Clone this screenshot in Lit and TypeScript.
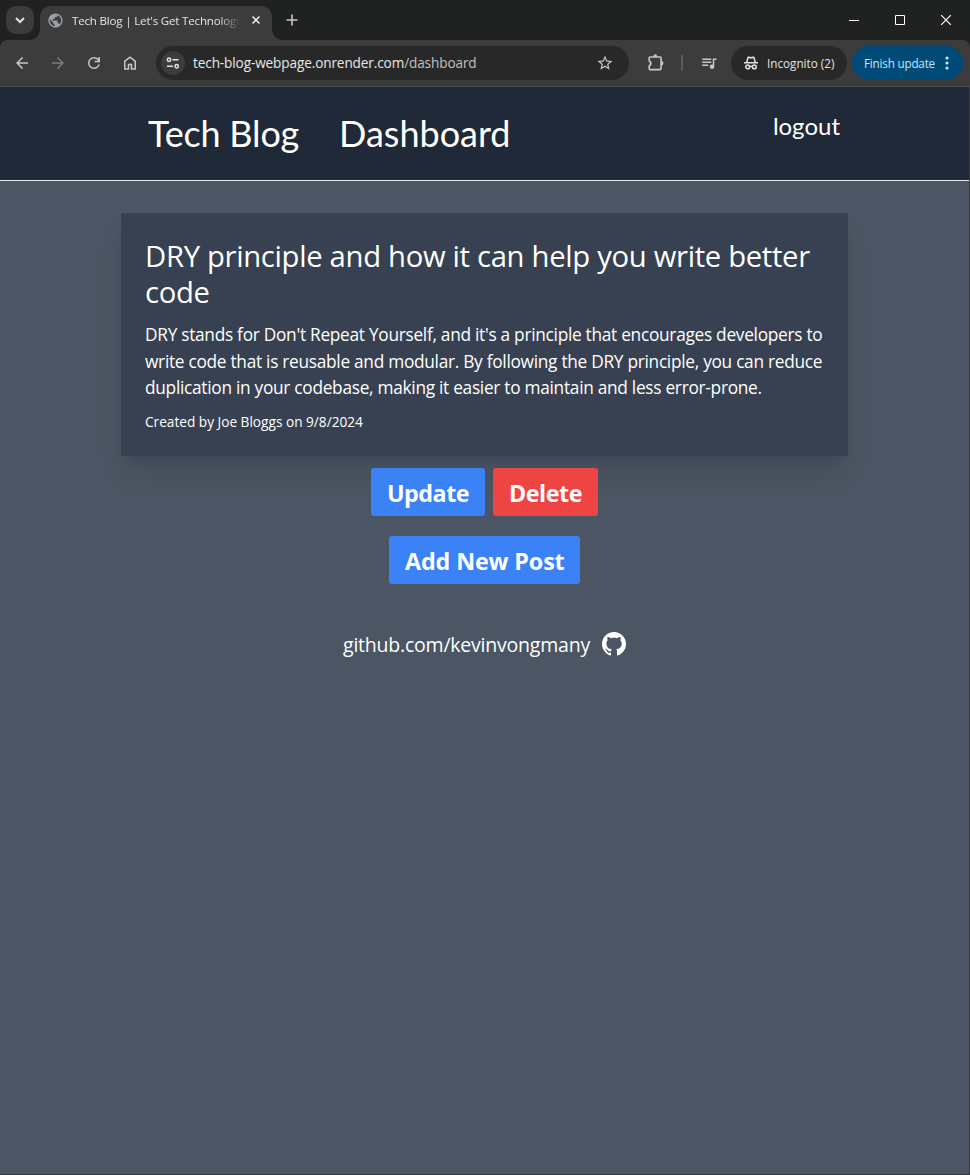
import { LitElement, html, css, svg } from "lit";
import { customElement, property } from "lit/decorators.js";

const paths: Record<string, string> = {
  back: "M20 11H7.83l5.59-5.59L12 4l-8 8 8 8 1.41-1.41L7.83 13H20v-2z",
  forward: "M12 4l-1.41 1.41L16.17 11H4v2h12.17l-5.58 5.59L12 20l8-8z",
  reload:
    "M12 20q-3.35 0-5.675-2.325T4 12q0-3.35 2.325-5.675T12 4q1.725 0 3.3.7125T18 6.75V4h2v7h-7V9h4.2q-.8-1.4-2.1875-2.2T12 6Q9.5 6 7.75 7.75T6 12q0 2.5 1.75 4.25T12 18q1.925 0 3.475-1.1T17.65 14h2.1q-.7 2.65-2.85 4.325T12 20Z",
  home: "M6 19h3v-6h6v6h3v-9l-6-4.5L6 10v9zm-2 2V9l8-6 8 6v12h-7v-6h-2v6H4z",
  star: "M22 9.24l-7.19-.62L12 2 9.19 8.63 2 9.24l5.46 4.73L5.82 21 12 17.27 18.18 21l-1.63-7.03L22 9.24zM12 15.4l-3.76 2.27 1-4.28-3.32-2.88 4.38-.38L12 6.1l1.71 4.04 4.38.38-3.32 2.88 1 4.28L12 15.4z",
  puzzle:
    "M20 10.2V6c0-1.1-.9-2-2-2h-4a2.3 2.3 0 0 0-4.6 0H5c-1.1 0-2 .9-2 2v4.3c2.4.6 2.4 4.8 0 5.4V20c0 1.1.9 2 2 2h13c1.1 0 2-.9 2-2v-4.2c2.6-.6 2.6-5 0-5.600zM18 20H5v-3c2.900-2 2.900-6 0-8V6h13z",
  queue:
    "M15 6H3v2h12V6zm0 4H3v2h12v-2zM3 16h8v-2H3v2zM17 6v8.180c-.310-.110-.650-.180-1-.180-1.660 0-3 1.340-3 3s1.340 3 3 3 3-1.340 3-3V8h3V6h-5z",
  globe:
    "M12 2C6.480 2 2 6.480 2 12s4.480 10 10 10 10-4.480 10-10S17.520 2 12 2zm-1 17.930c-3.950-.490-7-3.850-7-7.930 0-.620.080-1.210.210-1.790L9 15v1c0 1.100.900 2 2 2v1.930zm6.900-2.540c-.260-.810-1-1.390-1.900-1.390h-1v-3c0-.550-.450-1-1-1H8v-2h2c.550 0 1-.450 1-1V7h2c1.100 0 2-.900 2-2v-.410c2.930 1.190 5 4.060 5 7.410 0 2.080-.800 3.970-2.100 5.390z",
};

@customElement("ui-icon")
class UiIcon extends LitElement {
  @property() name = "";
  @property({ type: Number }) size = 18;

  static styles = css`
    :host { display: inline-flex; }
    svg { display: block; fill: currentColor; }
  `;

  render() {
    return html`<svg width=${this.size} height=${this.size} viewBox="0 0 24 24">
      ${svg`<path d=${paths[this.name] ?? ""}></path>`}
    </svg>`;
  }
}

@customElement("browser-chrome")
class BrowserChrome extends LitElement {
  static styles = css`
    :host {
      display: block;
      font-family: "Open Sans", "Noto Sans", sans-serif;
      background: #202222;
      color: #e3e3e3;
    }
    svg { display: block; }
    .strip { display: flex; height: 40px; padding-left: 6px; box-sizing: border-box; }
    .search {
      display: grid; place-items: center;
      width: 28px; height: 28px; margin-top: 6px;
      border-radius: 10px; background: #3c3c3c;
    }
    .tab {
      position: relative;
      display: flex; align-items: center;
      width: 232px; height: 34px; margin: 6px 0 0 6px;
      padding: 0 11px 6px 7px; box-sizing: border-box;
      border-radius: 10px 10px 0 0; background: #3c3c3c;
    }
    .tab::before, .tab::after {
      content: ""; position: absolute; bottom: 0; width: 10px; height: 10px;
    }
    .tab::before { left: -10px; background: radial-gradient(circle at 0 0, transparent 9.5px, #3c3c3c 10px); }
    .tab::after { right: -10px; background: radial-gradient(circle at 100% 0, transparent 9.5px, #3c3c3c 10px); }
    .favicon { color: #9aa0a6; }
    .title {
      flex: 1; margin: 1px 12px 0 8px; overflow: hidden; white-space: nowrap;
      font-size: 11.6px; line-height: 16px; letter-spacing: -0.2px;
      -webkit-mask-image: linear-gradient(90deg, #000 147px, transparent 169px);
      mask-image: linear-gradient(90deg, #000 147px, transparent 169px);
    }
    .plus { display: grid; place-items: center; width: 40px; height: 40px; }
    .window { display: flex; margin-left: auto; padding-right: 1px; }
    .window span { display: grid; place-items: center; width: 46px; height: 40px; }
    .toolbar {
      display: flex; align-items: center;
      height: 47px; padding: 0 7px 1px 4px; box-sizing: border-box;
      background: #3c3c3c; border-bottom: 1px solid #4a4a4a;
      border-radius: 8px 8px 0 0; color: #c7c7c7;
    }
    .cell { display: grid; place-items: center; width: 36px; height: 34px; }
    .off { color: #7c7c7c; }
    .omnibox {
      display: flex; align-items: center;
      width: 473px; height: 34px; margin: 0 8px; padding: 0 15px 0 5px;
      box-sizing: border-box; border-radius: 17px; background: #282828;
    }
    .site { display: grid; place-items: center; width: 24px; height: 24px; border-radius: 50%; background: #3c3c3c; }
    .url { flex: 1; margin-left: 8px; font-size: 13.6px; letter-spacing: -0.12px; color: #e8e8e8; }
    .url span { color: #c0c0c0; }
    .divider { width: 2px; height: 16px; margin: 0 8px; background: #5c5c5c; }
    .pill {
      display: flex; align-items: center; height: 34px; box-sizing: border-box;
      border-radius: 17px; font-size: 11.7px; white-space: nowrap;
    }
    .incognito { width: 116px; margin-left: 4px; padding-left: 12px; gap: 8px; background: #282828; color: #e3e3e3; }
    .update { width: 111px; margin-left: 5px; padding-left: 12px; gap: 10px; background: #004a77; color: #c2e7ff; letter-spacing: -0.2px; }
  `;

  render() {
    return html`
      <div class="strip">
        <div class="search">
          <svg width="10" height="7" viewBox="0 0 10 7" fill="none" stroke="#e3e3e3" stroke-width="2"><path d="M1 1l4 4 4-4" /></svg>
        </div>
        <div class="tab">
          <ui-icon class="favicon" name="globe" size="17"></ui-icon>
          <div class="title">Tech Blog | Let's Get Technologi</div>
          <svg width="10" height="10" viewBox="0 0 10 10" stroke="#e3e3e3" stroke-width="1.6"><path d="M1.5 1.5l7 7M8.5 1.5l-7 7" /></svg>
        </div>
        <div class="plus">
          <svg width="12" height="12" viewBox="0 0 12 12" stroke="#c7c7c7" stroke-width="1.6"><path d="M6 .5v11M.5 6h11" /></svg>
        </div>
        <div class="window">
          <span><svg width="10" height="10" viewBox="0 0 10 10" stroke="#fff"><path d="M0 5.5h10" /></svg></span>
          <span><svg width="10" height="10" viewBox="0 0 10 10" stroke="#fff" fill="none"><path d="M.5.5h9v9h-9z" /></svg></span>
          <span><svg width="10" height="10" viewBox="0 0 10 10" stroke="#fff" stroke-width="1.2"><path d="M0 0l10 10M10 0L0 10" /></svg></span>
        </div>
      </div>
      <div class="toolbar">
        <div class="cell"><ui-icon name="back"></ui-icon></div>
        <div class="cell off"><ui-icon name="forward"></ui-icon></div>
        <div class="cell"><ui-icon name="reload"></ui-icon></div>
        <div class="cell"><ui-icon name="home"></ui-icon></div>
        <div class="omnibox">
          <div class="site">
            <svg width="14" height="12" viewBox="0 0 14 12" fill="none" stroke="#e3e3e3" stroke-width="1.5">
              <circle cx="3" cy="2.7" r="1.7" /><path d="M6.5 2.7H12.5M1 9.3h6" /><circle cx="10.7" cy="9.3" r="1.7" />
            </svg>
          </div>
          <div class="url">tech-blog-webpage.onrender.com<span>/dashboard</span></div>
          <ui-icon name="star"></ui-icon>
        </div>
        <div class="cell"><ui-icon name="puzzle" size="19"></ui-icon></div>
        <div class="divider"></div>
        <div class="cell"><ui-icon name="queue"></ui-icon></div>
        <div class="pill incognito">
          <svg width="16" height="16" viewBox="0 0 16 16" fill="none" stroke="#e3e3e3" stroke-width="1.5">
            <path d="M1 7.7h14M3.7 7.5l1.3-4.9c.1-.4.5-.5.8-.3 1.400.6 3 .6 4.400 0 .3-.2.700-.1.800.3l1.300 4.900" />
            <circle cx="4.7" cy="11.9" r="1.9" /><circle cx="11.3" cy="11.9" r="1.9" /><path d="M6.6 11.6q1.4-.7 2.8 0" />
          </svg>
          <span>Incognito (2)</span>
        </div>
        <div class="pill update">
          <span>Finish update</span>
          <svg width="4" height="16" viewBox="0 0 4 16" fill="#c2e7ff"><circle cx="2" cy="3" r="1.6" /><circle cx="2" cy="8" r="1.6" /><circle cx="2" cy="13" r="1.6" /></svg>
        </div>
      </div>
    `;
  }
}

@customElement("blog-page")
class BlogPage extends LitElement {
  static styles = css`
    :host {
      display: flex; flex-direction: column;
      background: #4b5563; color: #fff;
      border-right: 1px solid #343a40; border-bottom: 1px solid #343a40;
      font-family: "Open Sans", "Noto Sans", sans-serif;
    }
    header {
      display: flex; align-items: flex-start;
      height: 94px; box-sizing: border-box; padding: 26px 129px 0 148px;
      background: #1f2937; border-bottom: 1px solid #e5e7eb;
      font-family: Lato, sans-serif;
    }
    nav { display: flex; gap: 40px; font-size: 36px; line-height: 40px; }
    .brand { letter-spacing: -0.2px; }
    .logout { margin: -3px 0 0 auto; font-size: 24px; line-height: 32px; }
    main { display: flex; flex-direction: column; align-items: center; padding-top: 32px; }
    article {
      width: 727px; height: 243px; box-sizing: border-box; padding: 25px 0 0 24px;
      border-radius: 2px; background: #374151; white-space: nowrap;
      box-shadow: 0 20px 25px -5px rgba(0, 0, 0, 0.1), 0 8px 10px -6px rgba(0, 0, 0, 0.1);
    }
    h2 { margin: 0; font-size: 29.25px; line-height: 36px; font-weight: 400; letter-spacing: -0.32px; }
    .body { margin: 12px 0 0; font-size: 17.3px; line-height: 26.6px; letter-spacing: -0.285px; }
    .meta { margin: 10px 0 0; font-size: 13.65px; line-height: 20px; }
    .actions { display: flex; gap: 8px; margin-top: 12px; }
    button {
      height: 48px; padding: 3px 0 0 16px; border: 0; border-radius: 3px;
      color: #fff; background: #3b82f6; text-align: left; white-space: nowrap;
      font: 700 23.3px/1 "Open Sans", "Noto Sans", sans-serif;
    }
    .edit { width: 114px; letter-spacing: -0.5px; }
    .delete { width: 105px; background: #ef4444; letter-spacing: -0.45px; }
    .add { width: 191px; margin-top: 20px; letter-spacing: -0.12px; }
    footer {
      display: flex; align-items: center; justify-content: center; gap: 12px;
      margin-top: 45px; font-size: 19.5px; line-height: 28px; letter-spacing: -0.22px;
    }
    .link { padding-top: 2px; }
    svg { display: block; }
  `;

  render() {
    return html`
      <header>
        <nav><span class="brand">Tech Blog</span><span>Dashboard</span></nav>
        <span class="logout">logout</span>
      </header>
      <main>
        <article>
          <h2>DRY principle and how it can help you write better<br />code</h2>
          <p class="body">
            DRY stands for Don't Repeat Yourself, and it's a principle that encourages developers to<br />
            write code that is reusable and modular. By following the DRY principle, you can reduce<br />
            duplication in your codebase, making it easier to maintain and less error-prone.
          </p>
          <p class="meta">Created by Joe Bloggs on 9/8/2024</p>
        </article>
        <div class="actions">
          <button class="edit">Update</button>
          <button class="delete">Delete</button>
        </div>
        <button class="add">Add New Post</button>
      </main>
      <footer>
        <span class="link">github.com/kevinvongmany</span>
        <svg width="24" height="24" viewBox="0 0 16 16" fill="#fff">
          <path d="M8 0C3.580 0 0 3.580 0 8c0 3.540 2.290 6.530 5.470 7.590.4.070.55-.17.55-.38 0-.19-.01-.82-.01-1.490-2.010.37-2.530-.49-2.690-.94-.09-.23-.48-.94-.82-1.130-.28-.15-.68-.52-.01-.53.63-.01 1.080.58 1.230.82.72 1.210 1.870.87 2.330.66.07-.52.28-.87.51-1.070-1.780-.2-3.640-.89-3.640-3.950 0-.87.31-1.590.82-2.150-.08-.2-.36-1.020.08-2.120 0 0 .67-.21 2.200.82.64-.18 1.320-.27 2-.27s1.360.09 2 .27c1.530-1.040 2.200-.82 2.200-.82.44 1.100.16 1.920.08 2.120.51.56.82 1.270.82 2.150 0 3.070-1.870 3.750-3.650 3.950.29.25.54.73.54 1.480 0 1.070-.01 1.930-.01 2.200 0 .21.15.46.55.38A8.013 8.013 0 0 0 16 8c0-4.420-3.580-8-8-8z" />
        </svg>
      </footer>
    `;
  }
}

@customElement("app-root")
export class AppRoot extends LitElement {
  static styles = css`
    :host { display: flex; flex-direction: column; height: 1175px; overflow: hidden; }
    blog-page { flex: 1; }
  `;

  render() {
    return html`<browser-chrome></browser-chrome><blog-page></blog-page>`;
  }
}
